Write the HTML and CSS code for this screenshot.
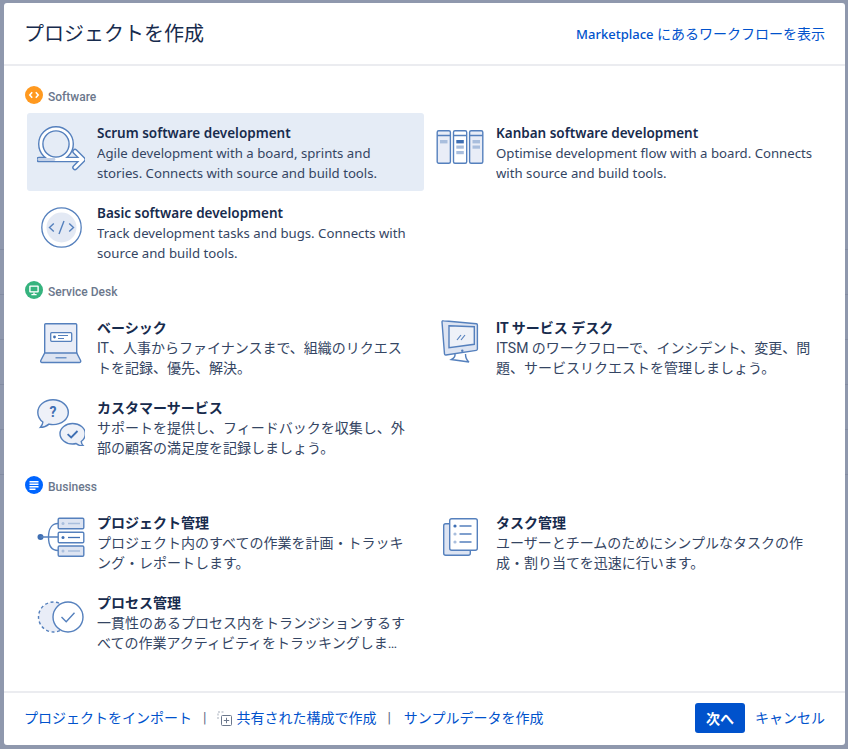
FILE: index.html
```html
<!DOCTYPE html>
<html lang="ja">

<head>
    <meta charset="utf-8">
    <title>プロジェクトを作成</title>
    <link rel="stylesheet" href="styles.css">
</head>

<body>
    <div class="dialog">
        <header class="dialog-header">
            <h1>プロジェクトを作成</h1>
            <a class="link" href="#"><span class="latin">Marketplace</span> にあるワークフローを表示</a>
        </header>

        <main class="dialog-body">
            <h2 class="group-title">
                <svg class="group-icon" viewBox="0 0 18 18">
                    <circle cx="9" cy="9" r="9" fill="#ff991f" />
                    <path d="M7.2 6.2 4.8 9l2.4 2.8M10.8 6.2 13.2 9l-2.4 2.8" fill="none" stroke="#fff" stroke-width="1.6" />
                </svg>
                <span>Software</span>
            </h2>
            <div class="item-grid">
                <div class="item selected">
                    <svg class="item-icon" viewBox="0 0 48 48">
                        <g fill="none" stroke="#5580bd" stroke-width="5.6">
                            <circle cx="19" cy="21" r="15.2" />
                            <path d="M2 36.5h41" stroke-linecap="round" />
                            <path d="M38 28.5l8 8-8 8" stroke-linecap="round" stroke-linejoin="round" />
                        </g>
                        <g fill="none" stroke="#fff" stroke-width="2.8">
                            <circle cx="19" cy="21" r="15.2" />
                            <path d="M15 36.5h28" stroke-linecap="round" />
                            <path d="M38 28.5l8 8-8 8" stroke-linecap="round" stroke-linejoin="round" />
                        </g>
                        <path d="M2 36.5h15" stroke="#c3d1e8" stroke-width="2.8" stroke-linecap="round" />
                    </svg>
                    <div class="item-text en">
                        <h3>Scrum software development</h3>
                        <p>Agile development with a board, sprints and stories. Connects with source and build tools.</p>
                    </div>
                </div>
                <div class="item">
                    <svg class="item-icon" viewBox="0 0 48 48">
                        <g stroke="#5580bd" stroke-width="1.4">
                            <rect x="1.2" y="7.7" width="13.2" height="32.6" rx="1.5" fill="#e9edf7" />
                            <rect x="17.5" y="7.7" width="13.2" height="32.6" rx="1.5" fill="#fff" />
                            <rect x="33.6" y="7.7" width="13.2" height="32.6" rx="1.5" fill="#e9edf7" />
                            <path d="M1.2 12.5h13.2M17.5 12.5h13.2M33.6 12.5h13.2" />
                        </g>
                        <rect x="4" y="17" width="7.5" height="3.4" fill="#a9bedd" />
                        <rect x="20.3" y="17" width="7.5" height="3.4" fill="#3f6fb3" />
                        <rect x="20.3" y="22.5" width="7.5" height="3.2" fill="#a9bedd" />
                        <rect x="20.3" y="28" width="7.5" height="3.2" fill="#a9bedd" />
                        <rect x="36.5" y="17" width="7.5" height="3.4" fill="#a9bedd" />
                        <rect x="36.5" y="22.5" width="7.5" height="3.2" fill="#a9bedd" />
                    </svg>
                    <div class="item-text en">
                        <h3>Kanban software development</h3>
                        <p>Optimise development flow with a board. Connects with source and build tools.</p>
                    </div>
                </div>
                <div class="item">
                    <svg class="item-icon" viewBox="0 0 48 48">
                        <circle cx="24.5" cy="24.5" r="19.7" fill="#fff" stroke="#5580bd" stroke-width="1.3" />
                        <circle cx="24.5" cy="24.5" r="15" fill="#e3e9f4" />
                        <path d="M16.8 20.5l-4.3 4 4.3 4M32.2 20.5l4.3 4-4.3 4M27 18l-5 13" fill="none" stroke="#5580bd" stroke-width="1.4" />
                    </svg>
                    <div class="item-text en">
                        <h3>Basic software development</h3>
                        <p>Track development tasks and bugs. Connects with source and build tools.</p>
                    </div>
                </div>
            </div>

            <h2 class="group-title">
                <svg class="group-icon" viewBox="0 0 18 18">
                    <circle cx="9" cy="9" r="9" fill="#36b37e" />
                    <rect x="4.2" y="4.4" width="9.6" height="7.2" rx="1" fill="#fff" />
                    <rect x="5.6" y="5.8" width="6.8" height="4.4" fill="#36b37e" />
                    <path d="M9 11.6v2M6.4 13.7h5.2" stroke="#fff" stroke-width="1.3" />
                </svg>
                <span>Service Desk</span>
            </h2>
            <div class="item-grid">
                <div class="item">
                    <svg class="item-icon" viewBox="0 0 48 48">
                        <rect x="7.7" y="5.7" width="32" height="31" rx="1" fill="#e9edf7" stroke="#5580bd" stroke-width="1.4" />
                        <rect x="13.7" y="14.7" width="21" height="8.6" rx="1" fill="#fff" stroke="#5580bd" stroke-width="1.3" />
                        <circle cx="17.5" cy="19" r="1.4" fill="#3f6fb3" />
                        <path d="M21 17.5h10M21 20.5h6" stroke="#5580bd" stroke-width="1.1" />
                        <path d="M7.7 35h32l3.9 7.500c.5 1-.2 2-1.200 2H5c-1 0-1.700-1-1.200-2z" fill="#dde4f2" stroke="#5580bd" stroke-width="1.4" />
                        <path d="M18.500 39.800h11" stroke="#5580bd" stroke-width="1.200" />
                    </svg>
                    <div class="item-text">
                        <h3>ベーシック</h3>
                        <p>IT、人事からファイナンスまで、組織のリクエストを記録、優先、解決。</p>
                    </div>
                </div>
                <div class="item">
                    <svg class="item-icon" viewBox="0 0 48 48">
                        <path d="M19 36c.3 2.500-1.500 4.500-3.500 5.500l17.500 2.500c-2-1.500-3.500-4-3.500-8" fill="#fff" stroke="#5580bd" stroke-width="1.400" />
                        <path d="M7.300 2.800l33 3c.7.100 1.100.6 1.100 1.300v24c0 .7-.4 1.200-1.100 1.300L10 37c-.8.100-1.400-.3-1.500-1L6 4c0-.8.500-1.300 1.300-1.200z" fill="#dde4f2" stroke="#5580bd" stroke-width="1.400" />
                        <path d="M13 7.700l25.300 1v17.600L13 29.700z" fill="#eef1f8" stroke="#5580bd" stroke-width="1.400" />
                        <path d="M21 22l4-5M25 22l4-5" stroke="#5580bd" stroke-width="1.200" />
                        <circle cx="26.300" cy="32.700" r="1.200" fill="#5580bd" />
                    </svg>
                    <div class="item-text">
                        <h3>IT サービス デスク</h3>
                        <p>ITSM のワークフローで、インシデント、変更、問題、サービスリクエストを管理しましょう。</p>
                    </div>
                </div>
                <div class="item">
                    <svg class="item-icon" viewBox="0 0 48 48">
                        <path d="M16 1.800C7.300 1.800.8 7.400.8 14.400c0 3.900 2 7.300 5.100 9.600-.1 2-1.100 3.700-2.600 5.400 3.500-.1 6.500-1.400 8.700-3.300 1.300.3 2.600.5 4 .5 8.700 0 15.300-5.600 15.300-12.200S24.700 1.800 16 1.800z" fill="#eef1f8" stroke="#5580bd" stroke-width="1.400" />
                        <text x="16" y="19" class="icon-text">?</text>
                        <path d="M35.500 25.500c-6.800 0-12.500 4.700-12.500 10.200 0 5.600 5.700 10.300 12.500 10.300 1.300 0 2.500-.2 3.600-.5 1.900 1.600 4.400 2.500 7.400 2.500-1.300-1.300-2.100-2.800-2.300-4.500 2.500-1.800 4.100-4.700 4.100-7.800 0-5.500-5.500-10.200-12.800-10.200z" fill="#eef1f8" stroke="#5580bd" stroke-width="1.400" />
                        <path d="M30.600 36.200l3.600 3.300 6.300-6.500" fill="none" stroke="#3f6fb3" stroke-width="1.800" />
                    </svg>
                    <div class="item-text">
                        <h3>カスタマーサービス</h3>
                        <p>サポートを提供し、フィードバックを収集し、外部の顧客の満足度を記録しましょう。</p>
                    </div>
                </div>
            </div>

            <h2 class="group-title">
                <svg class="group-icon" viewBox="0 0 18 18">
                    <circle cx="9" cy="9" r="9" fill="#0065ff" />
                    <path d="M4.500 5.700h9M4.500 8.200h9M4.500 10.700h9M4.500 13.200h6" stroke="#fff" stroke-width="1.400" />
                </svg>
                <span>Business</span>
            </h2>
            <div class="item-grid">
                <div class="item">
                    <svg class="item-icon" viewBox="0 0 48 48">
                        <circle cx="3.500" cy="24" r="3" fill="#3f6fb3" />
                        <path d="M3.500 24h17.500M21 10.500c-6 0-9.500 5-9.500 13.500s3.500 13.500 9.500 13.500" fill="none" stroke="#5580bd" stroke-width="1.400" />
                        <g stroke="#5580bd" stroke-width="1.400">
                            <rect x="21.200" y="5.200" width="25.600" height="10.600" rx="1.200" fill="#dde4f2" />
                            <rect x="21.200" y="19.200" width="25.600" height="10.600" rx="1.200" fill="#fff" />
                            <rect x="21.200" y="33" width="25.600" height="10.300" rx="1.200" fill="#dde4f2" />
                        </g>
                        <circle cx="26" cy="10.500" r="1.500" fill="#a9bedd" />
                        <circle cx="26" cy="24.500" r="1.500" fill="#3f6fb3" />
                        <circle cx="26" cy="38" r="1.500" fill="#a9bedd" />
                        <path d="M31 10.500h12M31 38h12" stroke="#a9bedd" stroke-width="1.300" />
                        <path d="M31 24.500h12" stroke="#3f6fb3" stroke-width="1.300" />
                    </svg>
                    <div class="item-text">
                        <h3>プロジェクト管理</h3>
                        <p>プロジェクト内のすべての作業を計画・トラッキング・レポートします。</p>
                    </div>
                </div>
                <div class="item">
                    <svg class="item-icon" viewBox="0 0 48 48">
                        <rect x="7.700" y="10.700" width="26.600" height="31.600" rx="2" fill="#dde4f2" stroke="#5580bd" stroke-width="1.400" />
                        <rect x="13.700" y="5.700" width="27.600" height="31.600" rx="2" fill="#fff" stroke="#5580bd" stroke-width="1.400" />
                        <circle cx="19" cy="13" r="1.600" fill="#3f6fb3" />
                        <circle cx="19" cy="21" r="1.600" fill="#a9bedd" />
                        <circle cx="19" cy="29" r="1.600" fill="#a9bedd" />
                        <path d="M23.500 13h12M23.500 21h12M23.500 29h12" stroke="#5580bd" stroke-width="1.300" />
                    </svg>
                    <div class="item-text">
                        <h3>タスク管理</h3>
                        <p>ユーザーとチームのためにシンプルなタスクの作成・割り当てを迅速に行います。</p>
                    </div>
                </div>
                <div class="item">
                    <svg class="item-icon" viewBox="0 0 48 48">
                        <circle cx="16.500" cy="24" r="15" fill="#e9edf7" stroke="#5580bd" stroke-width="1.400" stroke-dasharray="3 2.600" />
                        <circle cx="31" cy="24" r="15" fill="#fff" stroke="#5580bd" stroke-width="1.400" />
                        <path d="M24.500 24l4.700 4.700 8.300-9" fill="none" stroke="#5580bd" stroke-width="1.400" />
                    </svg>
                    <div class="item-text">
                        <h3>プロセス管理</h3>
                        <p class="tight">一貫性のあるプロセス内をトランジションするすべての作業アクティビティをトラッキングしましょう。</p>
                    </div>
                </div>
            </div>
        </main>

        <footer class="dialog-footer">
            <div class="footer-links">
                <a class="link" href="#">プロジェクトをインポート</a>
                <span class="sep">|</span>
                <a class="link shared" href="#">
                    <svg class="shared-icon" viewBox="0 0 15 16">
                        <path d="M1 9V2h7" fill="none" stroke="#a5adba" stroke-width="1" stroke-dasharray="2 1.500" />
                        <rect x="4.500" y="5.500" width="10" height="10" rx="1" fill="#fff" stroke="#6b778c" />
                        <path d="M9.500 7.800v5.400M6.800 10.500h5.400" stroke="#6b778c" />
                    </svg>
                    共有された構成で作成
                </a>
                <span class="sep">|</span>
                <a class="link" href="#">サンプルデータを作成</a>
            </div>
            <div class="footer-actions">
                <button class="primary">次へ</button>
                <a class="link" href="#">キャンセル</a>
            </div>
        </footer>
    </div>
</body>

</html>
```

FILE: styles.css
```css
html,
body {
    height: 100%;
}

body {
    font-family: Roboto, "Noto Sans CJK JP", sans-serif;
    font-size: 14px;
    line-height: 20px;
    color: #172b4d;
    background-color: #8f98ad;
    background-image: repeating-linear-gradient(to bottom, transparent 0, transparent 44px, #838ca2 44px, #838ca2 45px);
    background-position: 0 205px;
    background-size: 100% 270px;
    background-repeat: no-repeat;
    margin: 0;
    padding: 3px 3px 4px 4px;
    box-sizing: border-box;
    overflow: hidden;
}

.dialog {
    height: 100%;
    background-color: #fff;
    border-radius: 3px;
    display: flex;
    flex-direction: column;
}

.dialog-header {
    height: 61px;
    padding: 0 20px;
    border-bottom: 2px solid #ebecf0;
    display: flex;
    justify-content: space-between;
    align-items: center;
    flex-shrink: 0;
}

h1 {
    margin: 0;
    font-size: 20px;
    font-weight: 400;
    line-height: 28px;
}

.link {
    color: #0052cc;
    text-decoration: none;
}

.latin {
    font-family: "Noto Sans", sans-serif;
    font-size: 13px;
    font-weight: 500;
}

.dialog-body {
    flex: 1;
    padding: 20px 21px 0 21px;
}

.group-title {
    height: 18px;
    margin: 0 0 9px 0;
    display: flex;
    gap: 5px;
    font-size: 12px;
    font-weight: 500;
    line-height: 18px;
    color: #6b778c;
}

.group-title span {
    margin-top: 2px;
}

.group-icon {
    width: 18px;
    height: 18px;
}

.item-grid {
    display: grid;
    grid-template-columns: 397px 397px;
    gap: 2px;
    margin: 0 0 10px 2px;
}

.item {
    display: flex;
    gap: 12px;
    padding: 10px 9px 8px 10px;
    border-radius: 3px;
}

.item.selected {
    background-color: #e5ecf6;
}

.item-icon {
    width: 48px;
    height: 48px;
    flex-shrink: 0;
}

.item-text {
    min-width: 0;
}

h3 {
    margin: 0;
    font-size: 14px;
    font-weight: 700;
    line-height: 20px;
}

.item-text p {
    margin: 0;
    max-width: 315px;
    color: #344563;
    display: -webkit-box;
    -webkit-box-orient: vertical;
    -webkit-line-clamp: 2;
    overflow: hidden;
}

.item-text p.tight {
    max-width: 310px;
}

/* latin text runs narrower than the kana around it */
.item-text.en h3 {
    font-family: "Noto Sans", sans-serif;
    font-size: 13.5px;
    font-weight: 600;
}

.item-text.en p {
    font-family: "Noto Sans", sans-serif;
    font-size: 13.2px;
    max-width: none;
}

.icon-text {
    font-size: 14px;
    font-weight: 700;
    fill: #3f6fb3;
    text-anchor: middle;
}

.dialog-footer {
    height: 50px;
    padding: 0 20px 2px 20px;
    border-top: 2px solid #ebecf0;
    display: flex;
    justify-content: space-between;
    align-items: center;
    flex-shrink: 0;
}

.footer-links {
    display: flex;
    align-items: center;
}

.sep {
    color: #5e6c84;
    margin: 0 13px 0 11px;
}

.shared {
    display: flex;
    align-items: center;
    gap: 4px;
    margin-left: -2px;
}

.shared-icon {
    width: 15px;
    height: 16px;
}

.footer-actions {
    display: flex;
    align-items: center;
    gap: 10px;
}

button.primary {
    width: 50px;
    height: 30px;
    border: none;
    border-radius: 3px;
    background-color: #0052cc;
    color: #fff;
    font-family: inherit;
    font-size: 14px;
    font-weight: 700;
    padding: 0;
    cursor: pointer;
}
```
